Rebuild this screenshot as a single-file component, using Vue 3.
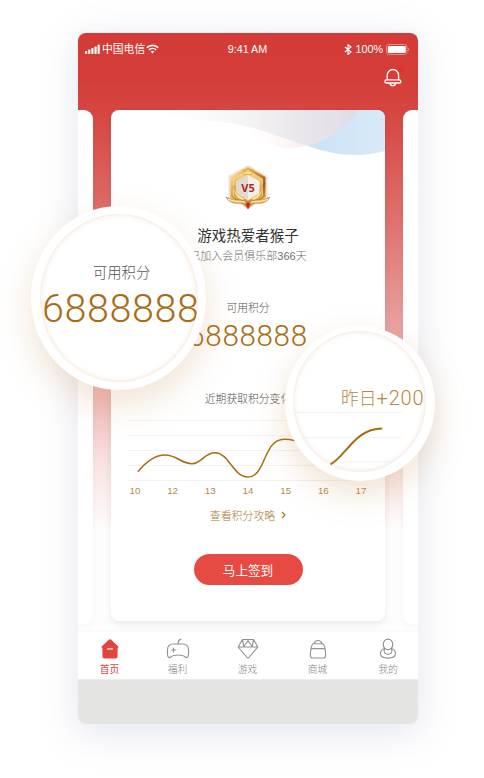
<script setup>
const days = [10, 12, 13, 14, 15, 16, 17]
const gridLines = [5.5, 20.5, 35.5, 50.5, 65.5]
const signal = [3, 4.5, 6, 7.5, 9.5]
const tabs = [
  { id: 'home', label: '首页' },
  { id: 'welfare', label: '福利' },
  { id: 'game', label: '游戏' },
  { id: 'mall', label: '商城' },
  { id: 'mine', label: '我的' }
]
</script>

<template>
  <main class="stage">
    <div class="phone">
      <div class="screen">
        <header class="status">
          <div class="carrier">
            <svg width="16" height="11" viewBox="0 0 16 11" fill="#fff">
              <rect v-for="(h, i) in signal" :key="i" :x="i * 3.15" :y="10 - h" width="2.2" :height="h" rx="0.8" />
            </svg>
            <span>中国电信</span>
            <svg class="wifi" width="13" height="10" viewBox="0 0 13 10" fill="none" stroke="#fff" stroke-width="1.6">
              <path d="M.8 3.7a8.2 8.2 0 0 1 11.4 0M2.9 5.9a5.2 5.2 0 0 1 7.2 0" />
              <path d="M6.5 9.5 4.6 7.6a2.8 2.8 0 0 1 3.8 0z" fill="#fff" stroke="none" />
            </svg>
          </div>
          <div class="clock">9:41 AM</div>
          <div class="power">
            <svg width="8" height="11" viewBox="0 0 8 11" fill="none" stroke="#fff" stroke-width="1.1">
              <path d="M1 3l6 5-3 2.400V.6L7 3 1 8" />
            </svg>
            <span>100%</span>
            <svg width="24" height="11" viewBox="0 0 24 11">
              <rect x=".5" y=".5" width="20.5" height="10" rx="2.4" fill="none" stroke="#e98a86" />
              <rect x="1.8" y="2" width="18" height="7" rx="1" fill="#fff" />
              <path d="M22 3.800c1.500.5 1.500 2.900 0 3.400z" fill="#e98a86" />
            </svg>
          </div>
        </header>
        <div class="notice">
          <svg width="22" height="22" viewBox="0 0 22 22" fill="none" stroke="#fff" stroke-width="1.3">
            <circle cx="18.5" cy="2.6" r="2.8" fill="#e4302a" stroke="none" />
            <path d="M4.200 12.800V8.200a5.700 5.700 0 0 1 11.400 0v4.600" />
            <rect x="1.9" y="12.8" width="16" height="3.2" rx="1.6" />
            <path d="M7 16.300c.4 3.200 5.200 3.200 5.600 0" />
          </svg>
        </div>

        <section class="deck">
          <div class="side side-left"></div>
          <article class="card">
            <svg class="waves" width="274" height="56" viewBox="0 0 274 56">
              <defs>
                <linearGradient id="waveBlue" x1="0" x2="1"><stop offset="0" stop-color="#c9e2f6" /><stop offset="1" stop-color="#dae9f8" /></linearGradient>
                <linearGradient id="wavePink" x1="0" x2="1"><stop offset="0" stop-color="#fff" stop-opacity="0" /><stop offset=".6" stop-color="#fce9e7" /><stop offset="1" stop-color="#f8e6e6" /></linearGradient>
                <linearGradient id="waveGray" x1="0" x2="1"><stop offset="0" stop-color="#fff" stop-opacity="0" /><stop offset=".55" stop-color="#f1eff0" /><stop offset="1" stop-color="#dfdbe5" /></linearGradient>
              </defs>
              <path d="M248 0H274V41Q238 51 197 36Q225 26 248 0Z" fill="url(#waveBlue)" />
              <path d="M130 17C160 46 203 49 248 0Z" fill="url(#wavePink)" />
              <path d="M30 0H248Q228 28 197 36C164 26 142 14 100 11C74 9 52 6 30 0Z" fill="url(#waveGray)" />
            </svg>
            <svg class="badge" width="46" height="48" viewBox="0 0 46 48">
              <defs>
                <linearGradient id="gold" x1="0" y1="0" x2="1" y2="1"><stop offset="0" stop-color="#fff1b5" /><stop offset=".35" stop-color="#e5a941" /><stop offset=".7" stop-color="#a65b19" /><stop offset="1" stop-color="#f5c35a" /></linearGradient>
                <linearGradient id="goldSoft" x1="0" y1="0" x2="0" y2="1"><stop offset="0" stop-color="#f7da85" /><stop offset="1" stop-color="#c98a2e" /></linearGradient>
              </defs>
              <path d="M23 0 42.500 11V33L23 44 3.500 33V11Z" fill="#e9e2d9" />
              <path d="M23 2 40.500 12V32L23 42 5.500 32V12Z" fill="url(#gold)" />
              <path d="M23 5.500 37.500 14V31L23 39 8.500 31V14Z" fill="url(#goldSoft)" stroke="#ffe9a0" stroke-width=".6" />
              <path d="M18.500 4.500 21 7l2-4 2 4 2.500-2.500-.8 5h-7.400Z" fill="#ffe07a" stroke="#c88520" stroke-width=".5" />
              <path d="M23 10 34.500 16V29L23 35.500 11.500 29V16Z" fill="#f3efea" />
              <path d="M23 10V35.500L11.500 29V16Z" fill="#e0dad3" />
              <path d="M8.500 20c1 7 4 10.500 11 13l-1 2.500C12 34 8.500 29 8.500 20ZM37.500 20c-1 7-4 10.500-11 13l1 2.500c6.500-1.500 10-6.500 10-15.500Z" fill="#ffe39a" stroke="#d39a3c" stroke-width=".5" />
              <path d="M1 32c5 3 10 2 14 3 4 0 6 2 8 5 2-3 4-5 8-5 4-1 9 0 14-3-2 5-8 7-14 6-3 0-5 2-8 6-3-4-5-6-8-6C9 39 3 37 1 32Z" fill="url(#goldSoft)" stroke="#a4651f" stroke-width=".5" />
              <path d="M3 34.500q9 3 17 2.500M43 34.500q-9 3-17 2.500" stroke="#fff0bd" fill="none" />
              <path d="M20.500 39 23 37 25.500 39 23 44Z" fill="#d2281e" />
              <text x="23" y="26.500" class="badge-label" text-anchor="middle"><tspan fill="#b3231b">V</tspan><tspan fill="#a23422">5</tspan></text>
            </svg>
            <h1 class="name">游戏热爱者猴子</h1>
            <p class="joined">已加入会员俱乐部366天</p>
            <p class="label points-label">可用积分</p>
            <p class="points">6888888</p>
            <p class="label trend-label">近期获取积分变化</p>
            <svg class="chart" width="274" height="68" viewBox="0 0 274 68" fill="none">
              <path v-for="y in gridLines" :key="y" :d="`M16 ${y}H257`" stroke="#f4f3f2" />
              <path d="M27.300 56.300C35 47 43 40 54 40C66 40 70 48.700 81 48.700C91 48.700 93 37.700 104 37.700C118 37.700 122 62 137 62C155 62 152 24.300 173 24.300Q179 24.300 184 25.700" stroke="#a96c14" stroke-width="1.5" stroke-linecap="round" />
            </svg>
            <div class="days"><span v-for="d in days" :key="d">{{ d }}</span></div>
            <a class="guide">查看积分攻略<svg width="5" height="8" viewBox="0 0 5 8" fill="none" stroke="#a97831" stroke-width="1.2"><path d="M1 1l3 3-3 3" /></svg></a>
            <button class="sign">马上签到</button>
          </article>
          <div class="side side-right"></div>
        </section>

        <nav class="tabs">
          <div v-for="t in tabs" :key="t.id" class="tab" :class="{ active: t.id === 'home' }">
            <svg width="24" height="22" viewBox="0 0 24 22" fill="none" stroke="#929292" stroke-width="1.15" stroke-linejoin="round" stroke-linecap="round">
              <g v-if="t.id === 'home'">
                <path d="M11 2.300a1.500 1.500 0 0 1 2 0L19.700 8.700c.4.500.1.800-.7.800V18.500a1.500 1.500 0 0 1-1.500 1.500h-11a1.500 1.500 0 0 1-1.500-1.500V9.500c-.8 0-1.100-.3-.7-.8Z" fill="#e5443d" stroke="#e5443d" />
                <path d="M9.500 10.800h5" stroke="#fff" />
              </g>
              <g v-else-if="t.id === 'welfare'">
                <path d="M12 6c0-3 .5-4.200 3-4.900M7 6h10c3.700 0 5.300 2 5.500 5.500.2 3 .2 5.500-.5 7-.5 1.300-1.700 1.500-2.800.5-1.700-1.600-3-2-7.200-2s-5.500.4-7.200 2c-1.100 1-2.300.8-2.800-.5-.7-1.500-.7-4-.5-7C1.700 8 3.300 6 7 6ZM7.500 10v4M5.500 12h4" />
              </g>
              <g v-else-if="t.id === 'game'">
                <path d="M6.500 1.500h11L21.800 9l-9.300 11h-1L2.200 9ZM2.200 9h19.600M6.500 1.500l1.300 7.200L12 2.500l4.200 6.200L17.500 1.500" />
              </g>
              <g v-else-if="t.id === 'mall'">
                <path d="M8 5.700a4.200 4.600 0 0 1 8 0M7.500 5.700h9c1.600 0 2.100 2.300 2.600 5.300.5 3.500.7 6 .3 7.500-.3 1-.8 1.500-2 1.500H6.600c-1.200 0-1.700-.5-2-1.500-.4-1.500-.2-4 .3-7.500.5-3 1-5.300 2.600-5.300ZM5 10.600h14" />
              </g>
              <g v-else>
                <ellipse cx="12" cy="6.4" rx="4.8" ry="5.3" />
                <path d="M8.500 10.500c-2.800 1-4 2.800-4 5 0 3.200 3.200 4.600 7.500 4.600s7.500-1.400 7.500-4.600c0-2.200-1.200-4-4-5M8.500 11.500c-1.500 2.500.8 4.700 3.500 4.700s5-2.200 3.500-4.700" />
              </g>
            </svg>
            <span>{{ t.label }}</span>
          </div>
        </nav>
        <footer class="bottom"></footer>
      </div>
    </div>

    <div class="lens lens-points">
      <div class="glass">
        <span class="lens-label">可用积分</span>
        <span class="lens-points-value">6888888</span>
      </div>
    </div>

    <div class="lens lens-trend">
      <div class="glass">
        <span class="lens-gain">昨日<b>+200</b></span>
        <svg width="133" height="62" viewBox="0 0 133 62" fill="none">
          <path d="M0 .5H110M0 26.500H110M0 51.500H110" stroke="#f0f0f0" />
          <path d="M36.500 54C52 47 61 17 90 17" stroke="#a96c14" stroke-width="2" />
        </svg>
      </div>
    </div>
  </main>
</template>

<style>
body { margin: 0; background: #fff; }
</style>

<style scoped>
* { box-sizing: border-box; }
.stage {
  position: relative;
  width: 484px;
  height: 778px;
  padding: 33px 0 0 78px;
  overflow: hidden;
  background: #fff;
  font-family: "Noto Sans CJK SC", sans-serif;
}
.phone {
  width: 340px;
  height: 691px;
  border-radius: 8px;
  box-shadow: 0 0 0 1px #f1f2f7, 0 8px 40px rgba(92, 108, 160, 0.18);
}
.screen {
  display: flex;
  flex-direction: column;
  height: 100%;
  border-radius: 8px;
  overflow: hidden;
  background: linear-gradient(#d43b36 0, #d43d38 45px, #d64641 77px, #d95651 120px, #df726f 190px, #e9a2a1 295px, #f0bdbc 370px, #f9e2e1 430px, #fefdfd 500px);
}
.status {
  display: grid;
  grid-template-columns: 1fr auto 1fr;
  align-items: center;
  height: 32px;
  padding: 0 8px 0 7px;
  color: #fff;
  font-family: "Liberation Sans", "Noto Sans CJK SC", sans-serif;
  font-size: 10.8px;
  line-height: 16px;
}
.carrier, .power { display: flex; align-items: center; }
.carrier { gap: 1px; }
.power { justify-content: flex-end; gap: 3px; }
.notice {
  display: flex;
  justify-content: flex-end;
  height: 45px;
  padding: 2px 13px 0 0;
}
.deck {
  display: grid;
  grid-template-columns: 15px 274px 15px;
  justify-content: space-between;
  height: 522px;
  padding-bottom: 11px;
}
.side { background: #fff; box-shadow: 0 3px 6px rgba(80, 50, 50, 0.04); height: 514px; }
.side-left { border-radius: 0 9px 9px 0; }
.side-right { border-radius: 9px 0 0 9px; }
.card {
  position: relative;
  display: flex;
  flex-direction: column;
  align-items: center;
  height: 511px;
  padding-top: 55px;
  border-radius: 8px;
  overflow: hidden;
  background: #fff;
  box-shadow: 0 3px 7px rgba(80, 50, 50, 0.1);
}
.waves { position: absolute; top: 0; left: 0; }
.badge { display: block; }
.badge-label { font: bold 11px "Noto Sans", sans-serif; }
.name {
  margin: 11px 0 0;
  font-size: 14.5px;
  font-weight: 400;
  line-height: 22px;
  color: #333;
}
.joined {
  margin: 1px 0 0;
  font-family: "Liberation Sans", "Noto Sans CJK SC", sans-serif;
  font-size: 11px;
  font-weight: 300;
  line-height: 18px;
  color: #707070;
}
.label {
  margin: 0;
  font-size: 10.8px;
  font-weight: 300;
  line-height: 16px;
  color: #555;
}
.points-label { margin-top: 34px; }
.points {
  margin: 3px 0 0;
  font-family: Roboto, sans-serif;
  font-size: 29.5px;
  font-weight: 300;
  line-height: 36px;
  letter-spacing: 0.7px;
  color: #a96c14;
}
.trend-label { margin-top: 36px; }
.chart { display: block; margin-top: 9px; }
.days {
  display: grid;
  grid-template-columns: repeat(7, 37.7px);
  height: 16px;
  font: 9.8px/16px "Liberation Sans", sans-serif;
  text-align: center;
  color: #b58a4c;
}
.guide {
  display: flex;
  align-items: center;
  gap: 6px;
  margin-top: 8px;
  font-size: 10.9px;
  font-weight: 300;
  line-height: 16px;
  color: #a97831;
}
.sign {
  width: 109px;
  height: 31px;
  margin: 31px 0 0;
  padding: 0;
  border: 0;
  border-radius: 16px;
  background: #e64a42;
  font-family: inherit;
  font-size: 12.6px;
  line-height: 29px;
  color: #fff;
}
.tabs {
  display: grid;
  grid-template-columns: 63px 73px 67px 73px 68px;
  height: 47px;
  padding-top: 6px;
  background: #fff;
  box-shadow: 0 -1px 1px #fafafa;
}
.tab {
  display: flex;
  flex-direction: column;
  align-items: center;
  font-size: 9.8px;
  font-weight: 300;
  line-height: 16px;
  color: #858585;
}
.tab span { margin-top: 1px; }
.tab.active { color: #e5443d; font-weight: 400; }
.bottom { flex: 1; background: #e4e4e2; border-top: 1px solid #ececea; }

.lens {
  position: absolute;
  border-radius: 50%;
  background: #fff;
}
.glass {
  height: 100%;
  border-radius: 50%;
  overflow: hidden;
  background: #fff;
  box-shadow: inset 0 0 5px 0 rgba(203, 137, 87, 0.3);
}
.lens-points {
  left: 31px;
  top: 206px;
  width: 175px;
  height: 184px;
  padding: 8px 8px 8px 9px;
  box-shadow: 0 14px 34px rgba(199, 143, 82, 0.25);
}
.lens-points .glass { display: flex; flex-direction: column; padding-left: 2px; }
.lens-label {
  margin: 47px 0 0 51px;
  font-size: 14.3px;
  font-weight: 300;
  line-height: 22px;
  color: #555;
}
.lens-points-value {
  margin-top: 4px;
  font-family: Roboto, sans-serif;
  font-size: 39.5px;
  font-weight: 300;
  line-height: 44px;
  letter-spacing: 0.6px;
  white-space: nowrap;
  color: #a96c14;
}
.lens-trend {
  left: 285px;
  top: 326px;
  width: 150px;
  height: 155px;
  padding: 5px 9px 9px 8px;
  box-shadow: 0 12px 32px rgba(199, 143, 82, 0.27);
}
.lens-trend .glass { display: flex; flex-direction: column; }
.lens-gain {
  margin: 53px 0 1px 48px;
  font-size: 17.8px;
  font-weight: 300;
  line-height: 26px;
  white-space: nowrap;
  color: #b58743;
}
.lens-gain b { font-family: Roboto, sans-serif; font-size: 20px; font-weight: 300; letter-spacing: 0.8px; }
</style>
